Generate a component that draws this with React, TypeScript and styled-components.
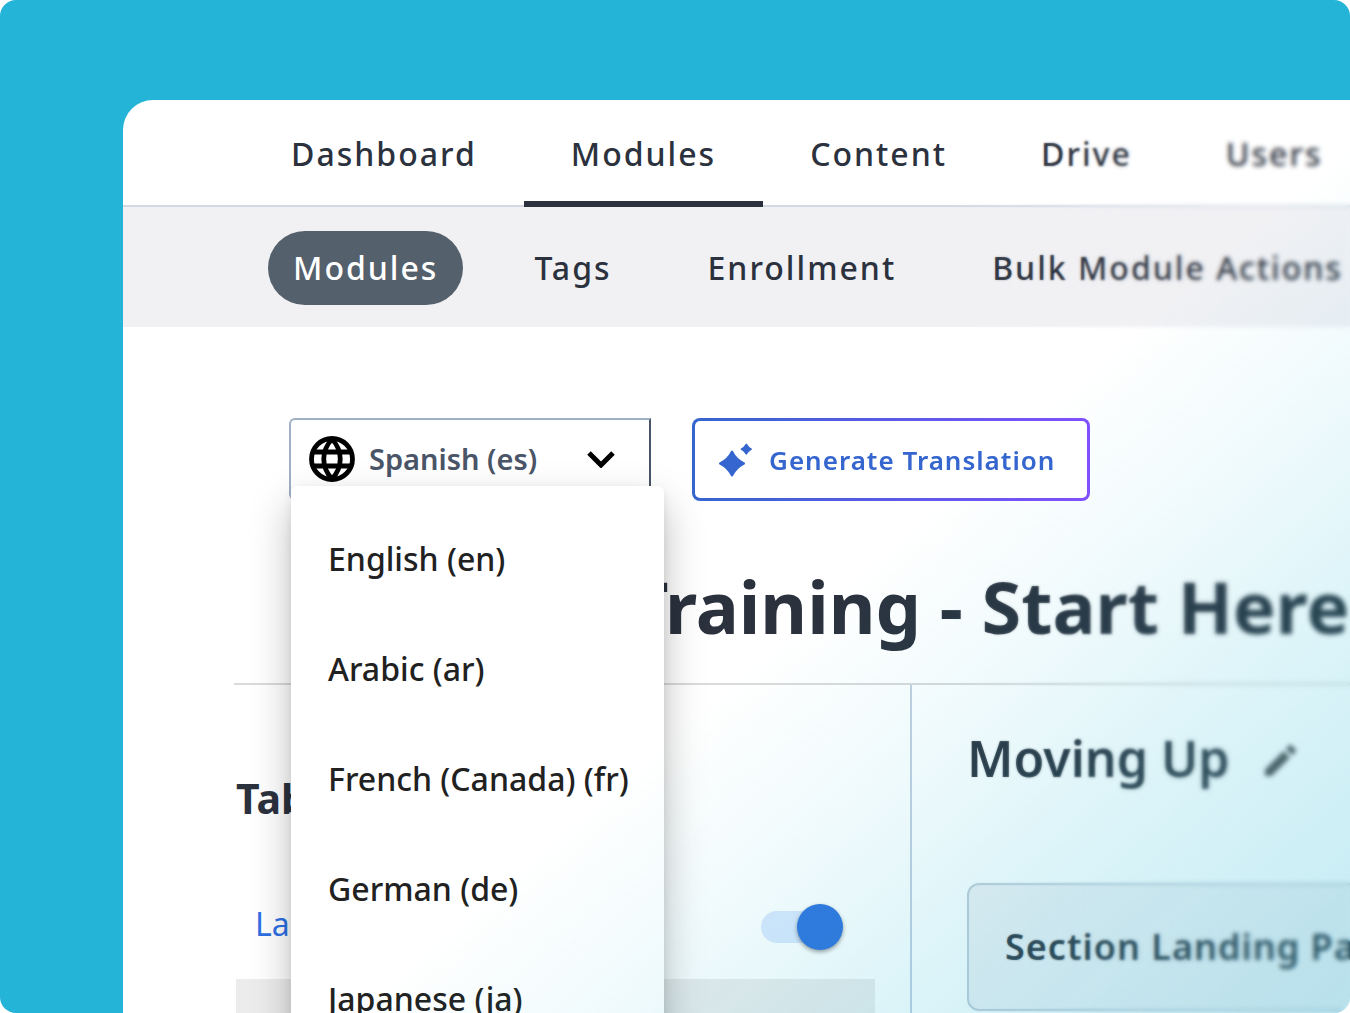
import React, { useState } from "react";
import styled, { createGlobalStyle, css } from "styled-components";

const ink = "#2b323e";
const slate = "#4a5568";

const GlobalStyle = createGlobalStyle`
  *, *::before, *::after { box-sizing: border-box; }
  body { margin: 0; background: #fff; }
  button, input { font: inherit; margin: 0; }
`;

const Canvas = styled.div`
  display: flex;
  height: 100vh;
  padding: 100px 0 0 123px;
  overflow: hidden;
  border-radius: 16px;
  background: #23b4d8;
  color: ${ink};
  font-family: "Noto Sans", "Open Sans", sans-serif;
`;

const Panel = styled.div`
  position: relative;
  flex: 1;
  min-width: 0;
  display: flex;
  flex-direction: column;
  overflow: hidden;
  border-top-left-radius: 30px;
  background: #fff;
`;

const MainNav = styled.nav`
  display: flex;
  flex: none;
  padding-left: 121px;
  border-bottom: 2px solid #d3dae4;
`;

const Tab = styled.a<{ $active?: boolean }>`
  flex: none;
  margin-bottom: -2px;
  padding: 32px 47px 25px;
  border-bottom: 6px solid ${(p) => (p.$active ? ink : "transparent")};
  color: inherit;
  font-size: 32px;
  font-weight: 500;
  line-height: 44px;
  letter-spacing: 2px;
  text-decoration: none;
  white-space: nowrap;
`;

const SubNav = styled.nav`
  display: flex;
  flex: none;
  gap: 46px;
  padding: 24px 0 22px 145px;
  background: #f1f1f4;
`;

const Pill = styled.a<{ $active?: boolean }>`
  flex: none;
  padding: 15px 25px;
  border-radius: 37px;
  font-size: 32px;
  font-weight: 500;
  line-height: 44px;
  letter-spacing: 2px;
  text-decoration: none;
  white-space: nowrap;
  color: inherit;
  ${(p) =>
    p.$active &&
    css`
      background: #54606c;
      color: #fff;
    `}
`;

const Toolbar = styled.div`
  display: flex;
  flex: none;
  gap: 41px;
  padding: 91px 0 0 166px;
`;

const Picker = styled.div`
  position: relative;
  z-index: 2;
  width: 362px;
`;

const PickerButton = styled.button`
  display: flex;
  align-items: center;
  width: 100%;
  height: 82px;
  padding: 0 34px 0 18px;
  border: 2px solid #9fafc6;
  border-right-color: ${slate};
  border-radius: 6px 0 0 6px;
  background: #fff;
  color: ${slate};
  font-size: 29px;
  font-weight: 600;
  line-height: 40px;
  text-align: left;
  white-space: nowrap;

  svg { flex: none; }
  span { flex: 1; padding-left: 14px; }
`;

const Menu = styled.ul`
  position: absolute;
  top: 68px;
  left: 2px;
  width: 373px;
  margin: 0;
  padding: 18px 0;
  border-radius: 6px;
  background: #fff;
  box-shadow: 0 18px 40px rgba(0, 0, 0, 0.26), 0 4px 10px rgba(0, 0, 0, 0.08);
  list-style: none;
`;

const Option = styled.li`
  padding: 33px 36px 33px 37px;
  color: #212121;
  font-size: 32px;
  font-weight: 500;
  line-height: 44px;
  white-space: nowrap;
`;

const GenerateButton = styled.button`
  position: relative;
  z-index: 5;
  display: flex;
  align-items: center;
  gap: 16px;
  height: 83px;
  padding: 0 32px 0 24px;
  border: 3px solid transparent;
  border-radius: 8px;
  background:
    linear-gradient(#fff, #fff) padding-box,
    linear-gradient(90deg, #3565ce, #8050ff) border-box;
  color: #3565ce;
  font-size: 26px;
  font-weight: 600;
  line-height: 40px;
  letter-spacing: 1px;
  white-space: nowrap;
`;

const Heading = styled.header`
  flex: none;
  margin-left: 111px;
  padding: 55px 0 27px 393px;
  border-bottom: 2px solid #dadada;
`;

const Title = styled.h1`
  margin: 0;
  font-size: 72px;
  font-weight: 700;
  line-height: 100px;
  white-space: nowrap;
`;

const Body = styled.div`
  display: flex;
  flex: 1;
  min-height: 0;
  padding-left: 113px;
`;

const Contents = styled.section`
  flex: none;
  width: 676px;
  padding: 83px 35px 0 0;
  border-right: 2px solid #c3d0e2;
`;

const ContentsTitle = styled.h2`
  margin: 0;
  font-size: 41px;
  font-weight: 700;
  line-height: 60px;
`;

const ContentsRow = styled.div`
  display: flex;
  align-items: center;
  justify-content: space-between;
  height: 52px;
  margin-top: 73px;
  padding: 0 36px 0 19px;
`;

const ContentsLink = styled.a`
  padding-bottom: 6px;
  color: #2f6fe4;
  font-size: 32px;
  line-height: 44px;
  text-decoration: none;
`;

const Switch = styled.input`
  appearance: none;
  display: flex;
  align-items: center;
  width: 78px;
  height: 32px;
  border-radius: 16px;
  background: #dae8fd;

  &::before {
    content: "";
    flex: none;
    width: 46px;
    height: 46px;
    margin: 0 -4px;
    border-radius: 50%;
    background: #3074de;
    box-shadow: 0 2px 4px rgba(0, 0, 0, 0.4);
  }
  &:checked { justify-content: flex-end; }
`;

const ContentsBand = styled.div`
  height: 60px;
  margin-top: 26px;
  background: #ececec;
`;

const Section = styled.section`
  flex: 1;
  min-width: 0;
  padding: 37px 0 0 55px;
`;

const SectionHead = styled.div`
  display: flex;
  align-items: center;
  gap: 33px;
`;

const SectionTitle = styled.h2`
  margin: 0;
  font-size: 50px;
  font-weight: 600;
  line-height: 72px;
  white-space: nowrap;
`;

const IconButton = styled.button`
  display: flex;
  padding: 4px 0 0;
  border: 0;
  background: none;
  color: #555;
`;

const Card = styled.article`
  margin-top: 89px;
  margin-right: -20px;
  padding: 38px 36px;
  border: 2px solid #c2cbd8;
  border-radius: 12px;
  background: #f1f1f4;
  font-size: 36px;
  font-weight: 600;
  line-height: 48px;
  letter-spacing: 1px;
  white-space: nowrap;
`;

const Veil = styled.div`
  position: absolute;
  inset: 0;
  z-index: 4;
  pointer-events: none;
  background: linear-gradient(
    139deg,
    rgba(34, 186, 214, 0) 56%,
    rgba(34, 186, 214, 0.08) 69%,
    rgba(34, 186, 214, 0.155) 79%,
    rgba(34, 182, 214, 0.28) 100%
  );
`;

const Haze = styled.div<{ $blur: number; $from: number; $to: number }>`
  position: absolute;
  inset: 0 0 0 auto;
  z-index: 3;
  width: 33%;
  pointer-events: none;
  backdrop-filter: blur(${(p) => p.$blur}px);
  mask-image: linear-gradient(90deg, transparent ${(p) => p.$from}%, #000 ${(p) => p.$to}%);
`;

const Globe = () => (
  <svg width="46" height="46" viewBox="0 0 46 46" fill="none" stroke="#000" strokeWidth="4.8" aria-hidden="true">
    <circle cx="23" cy="23" r="20.5" />
    <path d="M23 3C12 15 12 31 23 43M23 3C34 15 34 31 23 43M4 16H42M4 30H42" />
  </svg>
);

const Chevron = () => (
  <svg width="28" height="18" viewBox="0 0 28 18" fill="none" stroke="#000" strokeWidth="5" aria-hidden="true">
    <path d="M2 3L14 15L26 3" />
  </svg>
);

const Sparkles = () => (
  <svg width="34" height="34" viewBox="0 0 34 34" fill="#3565ce" stroke="#3565ce" strokeLinejoin="round" aria-hidden="true">
    <path strokeWidth="2" d="M13 8.500Q17 16.500 25 20.500Q17 24.500 13 32.500Q9 24.500 1 20.500Q9 16.500 13 8.500Z" />
    <path strokeWidth="1.500" d="M27.300 1.300Q29 4.400 32.200 6.100Q29 7.800 27.300 10.900Q25.600 7.800 22.400 6.100Q25.600 4.400 27.300 1.300Z" />
  </svg>
);

const Pencil = () => (
  <svg width="36" height="36" viewBox="0 0 36 36" fill="currentColor" aria-hidden="true">
    <path d="M2 27.500V34H8.500L27 15.500L20.500 9ZM32.500 10Q33.800 8.700 32.500 7.400L28.600 3.500Q27.300 2.200 26 3.500L22.800 6.700L29.300 13.200Z" />
  </svg>
);

const tabs = ["Dashboard", "Modules", "Content", "Drive", "Users"];
const subTabs = ["Modules", "Tags", "Enrollment", "Bulk Module Actions"];
const languages = ["English (en)", "Arabic (ar)", "French (Canada) (fr)", "German (de)", "Japanese (ja)"];

export default function App() {
  const [open, setOpen] = useState(true);
  const [language, setLanguage] = useState("Spanish (es)");
  const [visible, setVisible] = useState(true);

  return (
    <Canvas>
      <GlobalStyle />
      <Panel>
        <MainNav aria-label="Main">
          {tabs.map((name) => (
            <Tab key={name} href="#" $active={name === "Modules"}>{name}</Tab>
          ))}
        </MainNav>
        <SubNav aria-label="Modules">
          {subTabs.map((name) => (
            <Pill key={name} href="#" $active={name === "Modules"}>{name}</Pill>
          ))}
        </SubNav>
        <Toolbar>
          <Picker>
            <PickerButton type="button" aria-haspopup="listbox" aria-expanded={open} onClick={() => setOpen(!open)}>
              <Globe />
              <span>{language}</span>
              <Chevron />
            </PickerButton>
            {open && (
              <Menu role="listbox" aria-label="Language">
                {languages.map((name) => (
                  <Option
                    key={name}
                    role="option"
                    aria-selected={name === language}
                    onClick={() => {
                      setLanguage(name);
                      setOpen(false);
                    }}
                  >
                    {name}
                  </Option>
                ))}
              </Menu>
            )}
          </Picker>
          <GenerateButton type="button">
            <Sparkles />
            Generate Translation
          </GenerateButton>
        </Toolbar>
        <Heading>
          <Title>Training - Start Here</Title>
        </Heading>
        <Body>
          <Contents>
            <ContentsTitle>Table</ContentsTitle>
            <ContentsRow>
              <ContentsLink href="#">Land</ContentsLink>
              <Switch
                type="checkbox"
                role="switch"
                aria-label="Land"
                checked={visible}
                onChange={() => setVisible(!visible)}
              />
            </ContentsRow>
            <ContentsBand />
          </Contents>
          <Section>
            <SectionHead>
              <SectionTitle>Moving Up</SectionTitle>
              <IconButton type="button" aria-label="Edit"><Pencil /></IconButton>
            </SectionHead>
            <Card>Section Landing Page</Card>
          </Section>
        </Body>
        <Haze $blur={1} $from={0} $to={40} />
        <Haze $blur={2} $from={28} $to={75} />
        <Veil />
      </Panel>
    </Canvas>
  );
}
